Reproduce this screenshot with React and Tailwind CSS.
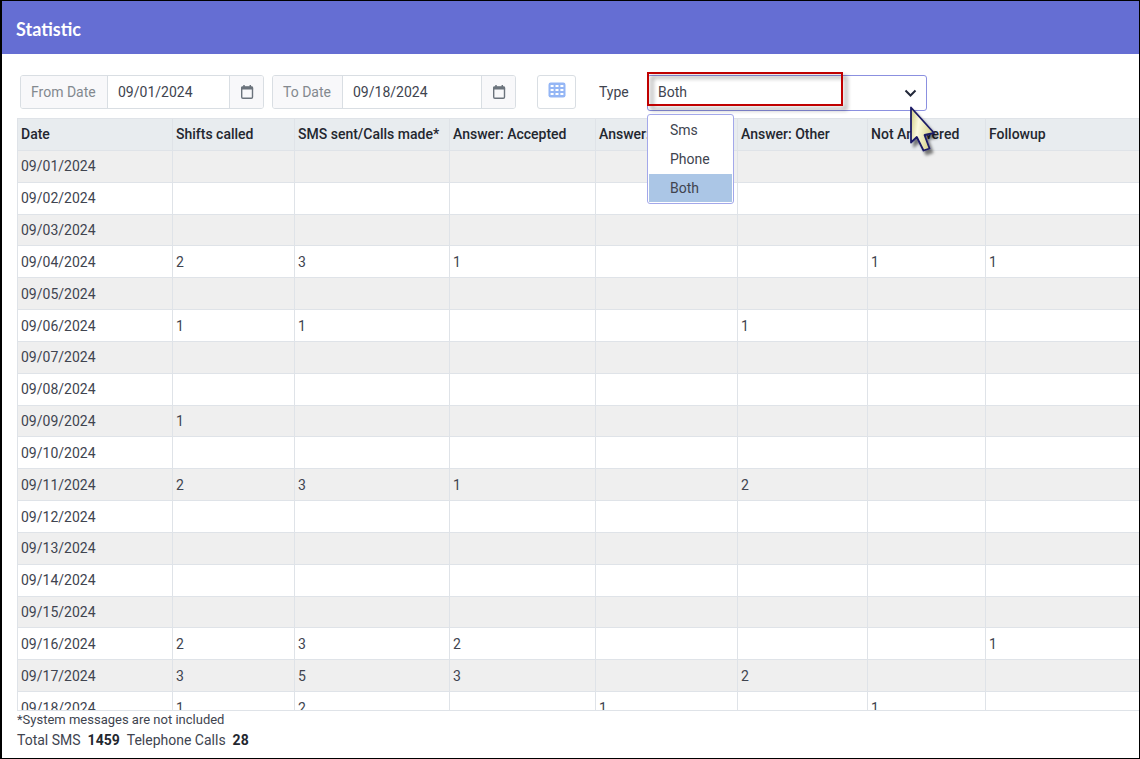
import React, { useState } from "react";

const types = ["Sms", "Phone", "Both"];

const columns = [
  { key: "date", title: "Date", col: "w-[155px]" },
  { key: "shifts", title: "Shifts called", col: "w-[122px]" },
  { key: "sent", title: "SMS sent/Calls made*", col: "w-[155px]" },
  { key: "accepted", title: "Answer: Accepted", col: "w-[146px]" },
  { key: "rejected", title: "Answer: Rejected", col: "w-[142px]" },
  { key: "other", title: "Answer: Other", col: "w-[130px]" },
  { key: "missed", title: "Not Answered", col: "w-[118px]" },
  { key: "followup", title: "Followup", col: "" },
];

const rows = [
  { date: "09/01/2024" },
  { date: "09/02/2024" },
  { date: "09/03/2024" },
  { date: "09/04/2024", shifts: 2, sent: 3, accepted: 1, missed: 1, followup: 1 },
  { date: "09/05/2024" },
  { date: "09/06/2024", shifts: 1, sent: 1, other: 1 },
  { date: "09/07/2024" },
  { date: "09/08/2024" },
  { date: "09/09/2024", shifts: 1 },
  { date: "09/10/2024" },
  { date: "09/11/2024", shifts: 2, sent: 3, accepted: 1, other: 2 },
  { date: "09/12/2024" },
  { date: "09/13/2024" },
  { date: "09/14/2024" },
  { date: "09/15/2024" },
  { date: "09/16/2024", shifts: 2, sent: 3, accepted: 2, followup: 1 },
  { date: "09/17/2024", shifts: 3, sent: 5, accepted: 3, other: 2 },
  { date: "09/18/2024", shifts: 1, sent: 2, rejected: 1, missed: 1 },
];

function CalendarIcon() {
  return (
    <svg width="14" height="16" viewBox="0 0 14 16" fill="none" aria-hidden="true">
      <rect x="1.7" y="3" width="10.8" height="11.2" rx="1.2" stroke="#6b737c" strokeWidth="1.4" />
      <path d="M1.2 2.8h11.9v2.8H1.2z" fill="#6b737c" />
      <path d="M4 1v3M10.3 1v3" stroke="#6b737c" strokeWidth="1.5" />
    </svg>
  );
}

function GridIcon() {
  return (
    <svg width="18" height="16" viewBox="0 0 18 16" aria-hidden="true">
      <rect x="0.5" y="0.5" width="17" height="15" rx="2.2" fill="#94b6f5" />
      <g fill="#ffffff">
        <path d="M2.6 3h3v2h-3zM7.5 3h3v2h-3zM12.4 3h3v2h-3z" />
        <path d="M2.6 7h3v2h-3zM7.5 7h3v2h-3zM12.4 7h3v2h-3z" />
        <path d="M2.6 11h3v2h-3zM7.5 11h3v2h-3zM12.4 11h3v2h-3z" />
      </g>
    </svg>
  );
}

function Pointer() {
  return (
    <svg
      className="pointer-events-none absolute top-[31px] left-[260px] z-20"
      width="34"
      height="54"
      viewBox="0 0 34 54"
      aria-hidden="true"
    >
      <defs>
        <linearGradient id="pointer-fill" x1="0" y1="0" x2="1" y2="0.3">
          <stop offset="0" stopColor="#cfca7c" />
          <stop offset="0.4" stopColor="#fcfbe0" />
          <stop offset="1" stopColor="#d6d08a" />
        </linearGradient>
        <filter id="pointer-shadow" x="-20%" y="-20%" width="160%" height="160%">
          <feDropShadow dx="3" dy="4" stdDeviation="1.8" floodColor="#000000" floodOpacity="0.5" />
        </filter>
      </defs>
      <path
        d="M4 1.5 4 36.5 9.8 31 16.5 44.5 22.5 42.5 17.5 29 27 27z"
        fill="url(#pointer-fill)"
        stroke="#1d1c66"
        strokeWidth="1.8"
        strokeLinejoin="round"
        filter="url(#pointer-shadow)"
      />
    </svg>
  );
}

function DateField({ id, label, value, labelClass, inputClass }) {
  const [date, setDate] = useState(value);

  return (
    <div className="flex h-[34px] overflow-hidden rounded-[3px] border border-[#d9dee3]">
      <label
        htmlFor={id}
        className={`flex items-center border-r border-[#d9dee3] bg-[#f8f8fa] pl-2.5 text-[#83898f] ${labelClass}`}
      >
        {label}
      </label>
      <input
        id={id}
        type="text"
        value={date}
        onChange={(e) => setDate(e.target.value)}
        className={`bg-white px-2.5 outline-none ${inputClass}`}
      />
      <button
        type="button"
        aria-label={`Pick ${label}`}
        className="flex w-[34px] items-center justify-center border-l border-[#d9dee3] bg-[#f8f8fa]"
      >
        <CalendarIcon />
      </button>
    </div>
  );
}

function TypeSelect() {
  const [type, setType] = useState("Both");

  return (
    <div className="relative">
      <select
        id="type"
        value={type}
        onChange={(e) => setType(e.target.value)}
        className="block h-9 w-[280px] appearance-none rounded-[3px] border border-[#8b90e0] bg-white px-2.5 pb-[3px] outline-none"
      >
        {types.map((t) => (
          <option key={t}>{t}</option>
        ))}
      </select>
      <svg
        className="pointer-events-none absolute top-[14px] right-[10px]"
        width="13"
        height="9"
        viewBox="0 0 13 9"
        fill="none"
        aria-hidden="true"
      >
        <path d="M1.5 1.5 6.5 6.5 11.5 1.5" stroke="#23283a" strokeWidth="2" />
      </svg>

      <div className="pointer-events-none absolute -top-[3px] left-0 h-[34px] w-[196px] border-2 border-[#c00000] drop-shadow-[4px_4px_2px_rgba(0,0,0,0.45)]" />

      <div
        role="listbox"
        aria-label="Type"
        className="absolute top-[39px] left-0 z-10 flex w-[87px] flex-col gap-px rounded-[3px] border border-[#a3a8ea] bg-white p-px"
      >
        {types.map((t) => (
          <button
            key={t}
            type="button"
            role="option"
            aria-selected={t === type}
            onClick={() => setType(t)}
            className={`h-7 w-full pl-[21px] text-left ${t === type ? "bg-[#abc6e6]" : "bg-white"}`}
          >
            {t}
          </button>
        ))}
      </div>

      <Pointer />
    </div>
  );
}

export default function App() {
  return (
    <div className="flex h-screen flex-col border border-l-2 border-black bg-white font-['Roboto',sans-serif] text-sm text-[#40444f]">
      <header className="flex h-[53px] shrink-0 items-center bg-[#656ed3] px-3.5 pt-0.5">
        <h1 className="font-['Lato',sans-serif] text-lg font-bold text-white">Statistic</h1>
      </header>

      <main className="flex min-h-0 flex-1 flex-col pt-[21px] pl-[15px]">
        <div className="mb-[7px] flex h-9 shrink-0 items-start pl-[3px]">
          <div className="flex gap-2">
            <DateField
              id="from-date"
              label="From Date"
              value="09/01/2024"
              labelClass="w-[87px]"
              inputClass="w-[121px]"
            />
            <DateField id="to-date" label="To Date" value="09/18/2024" labelClass="w-[70px]" inputClass="w-[138px]" />
          </div>
          <button
            type="button"
            aria-label="Show table"
            className="mr-[23px] ml-[21px] flex h-[34px] w-[39px] items-center justify-center rounded-[3px] border border-[#d9dee3] bg-white pb-1"
          >
            <GridIcon />
          </button>
          <label htmlFor="type" className="flex h-[34px] w-12 items-center">
            Type
          </label>
          <TypeSelect />
        </div>

        <div className="min-h-0 flex-1 overflow-hidden border-b border-l border-[#dfe3e8]">
          <table className="h-[606px] w-full table-fixed border-separate border-spacing-0">
            <colgroup>
              {columns.map((c) => (
                <col key={c.key} className={c.col} />
              ))}
            </colgroup>
            <thead>
              <tr className="bg-[#e8ecef]">
                {columns.map((c) => (
                  <th
                    key={c.key}
                    className="h-[33px] border-y border-r border-[#dfe3e8] px-[3px] pb-0.5 text-left font-medium whitespace-nowrap text-[#23272f] last:border-r-0"
                  >
                    {c.title}
                  </th>
                ))}
              </tr>
            </thead>
            <tbody>
              {rows.map((row) => (
                <tr key={row.date} className="odd:bg-[#efefef]">
                  {columns.map((c) => (
                    <td key={c.key} className="border-r border-b border-[#dfe3e8] px-[3px] py-1 last:border-r-0">
                      {row[c.key]}
                    </td>
                  ))}
                </tr>
              ))}
            </tbody>
          </table>
        </div>

        <footer className="h-[47px] shrink-0">
          <p className="text-[13px] leading-[18px]">*System messages are not included</p>
          <p className="flex gap-[7px] leading-[22px]">
            <span>Total SMS</span>
            <b className="text-[#23272f]">1459</b>
            <span>Telephone Calls</span>
            <b className="text-[#23272f]">28</b>
          </p>
        </footer>
      </main>
    </div>
  );
}
